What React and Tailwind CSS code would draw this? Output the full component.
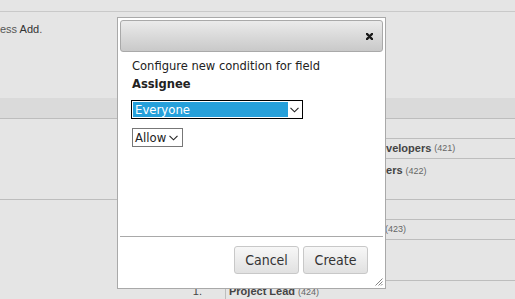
import { useState } from 'react'

function Chevron() {
    return (
        <svg width="9" height="6" viewBox="0 0 9 6" className="shrink-0">
            <path d="M0.5 0.8 L4.5 4.8 L8.5 0.8" fill="none" stroke="#222" strokeWidth="1.1" />
        </svg>
    )
}

function ConditionDialog() {
    const [who] = useState('Everyone')
    const [mode] = useState('Allow')

    return (
        <div className="absolute left-[117px] top-[17px] flex h-[272px] w-[269px] flex-col border border-[#a9a9a9] bg-white p-[2px] font-['DejaVu_Sans_Condensed','Liberation_Sans',sans-serif] text-[#222]">
            {/* Title bar */}
            <div className="flex h-[32px] shrink-0 items-center justify-end rounded-[3px] border border-[#a9a9a9] bg-linear-to-b from-[#ebebeb] to-[#c9c9c9] pr-[9px]">
                <svg width="7" height="7" viewBox="0 0 7 7">
                    <path d="M0.9 0.9 L6.1 6.1 M6.1 0.9 L0.9 6.1" stroke="#1a1a1a" strokeWidth="2.2" strokeLinecap="round" />
                </svg>
            </div>

            {/* Body */}
            <div className="flex-1 px-[12px] pt-[5px] text-[12.8px] leading-[18px]">
                <p>Configure new condition for field</p>
                <p className="font-bold">Assignee</p>

                <div className="ml-[-1px] mt-[7px] flex h-[19px] w-[172px] items-center border border-black p-px">
                    <div className="flex h-full flex-1 items-center bg-[#26a0da] pl-[2px] text-[13px] text-white">{who}</div>
                    <div className="flex w-[13px] justify-center">
                        <Chevron />
                    </div>
                </div>

                <div className="mt-[9px] flex h-[19px] w-[51px] items-center gap-[3px] border border-[#777] pl-[2px] text-[13px]">
                    <span>{mode}</span>
                    <Chevron />
                </div>
            </div>

            {/* Footer */}
            <div className="relative flex h-[50px] shrink-0 justify-end gap-[4px] border-t border-[#a9a9a9] pr-[15px] pt-[9px]">
                <button className="h-[28px] w-[65px] rounded-[3px] border border-[#c8c8c8] bg-linear-to-b from-[#f7f7f7] to-[#e1e1e1] text-[14px] text-[#333]">
                    Cancel
                </button>
                <button className="h-[28px] w-[65px] rounded-[3px] border border-[#c8c8c8] bg-linear-to-b from-[#f7f7f7] to-[#e1e1e1] text-[14px] text-[#333]">
                    Create
                </button>
                <svg width="8" height="8" viewBox="0 0 8 8" className="absolute bottom-0 right-0">
                    <path d="M7.5 0.5 L0.5 7.5 M7.5 3.5 L3.5 7.5 M7.5 6 L6 7.5" stroke="#777" strokeWidth="0.9" />
                </svg>
            </div>
        </div>
    )
}

function Count({ n }) {
    return <span className="ml-[3px] text-[9px] font-normal text-[#666]">({n})</span>
}

function App() {
    return (
        <div className="relative h-[299px] w-[515px] overflow-hidden bg-[#e5e5e5] font-['Liberation_Sans',Arial,sans-serif] text-[11px] text-[#444]">
            <div className="h-[12px] border-b border-[#c9c9c9]" />
            <div className="h-[86px] pt-[9px] text-[#555]">
                ess <span className="text-[#333]">Add</span>.
            </div>
            <div className="h-[21px] border-b border-[#bdbdbd] bg-[#dadada]" />

            {/* Permission rows */}
            <div className="flex h-[20px]">
                <div className="w-[225px]" />
                <div className="flex-1 border-b border-[#bdbdbd]" />
            </div>
            <div className="flex h-[20px]">
                <div className="w-[225px]" />
                <div className="flex flex-1 items-center border-b border-[#bdbdbd] pl-[147px] font-bold">
                    Developers<Count n="421" />
                </div>
            </div>
            <div className="flex h-[41px] border-b border-[#bdbdbd]">
                <div className="w-[225px]" />
                <div className="flex-1 pl-[147px] pt-[3px] font-bold">
                    Users<Count n="422" />
                </div>
            </div>
            <div className="flex h-[20px]">
                <div className="w-[225px]" />
                <div className="flex-1 border-b border-[#bdbdbd]" />
            </div>
            <div className="flex h-[20px]">
                <div className="w-[225px]" />
                <div className="flex flex-1 items-center border-b border-[#bdbdbd]">
                    <span className="inline-block w-[157px] text-right font-bold">Reporter</span>
                    <Count n="423" />
                </div>
            </div>
            <div className="flex h-[41px]">
                <div className="w-[225px]" />
                <div className="flex-1 border-b border-[#bdbdbd]" />
            </div>
            <div className="flex h-[40px]">
                <div className="w-[226px] border-r border-[#bdbdbd] pr-[23px] pt-[2px] text-right">1.</div>
                <div className="flex-1 pl-[3px] pt-[2px] font-bold">
                    Project Lead<Count n="424" />
                </div>
            </div>

            <ConditionDialog />
        </div>
    )
}

export default App
